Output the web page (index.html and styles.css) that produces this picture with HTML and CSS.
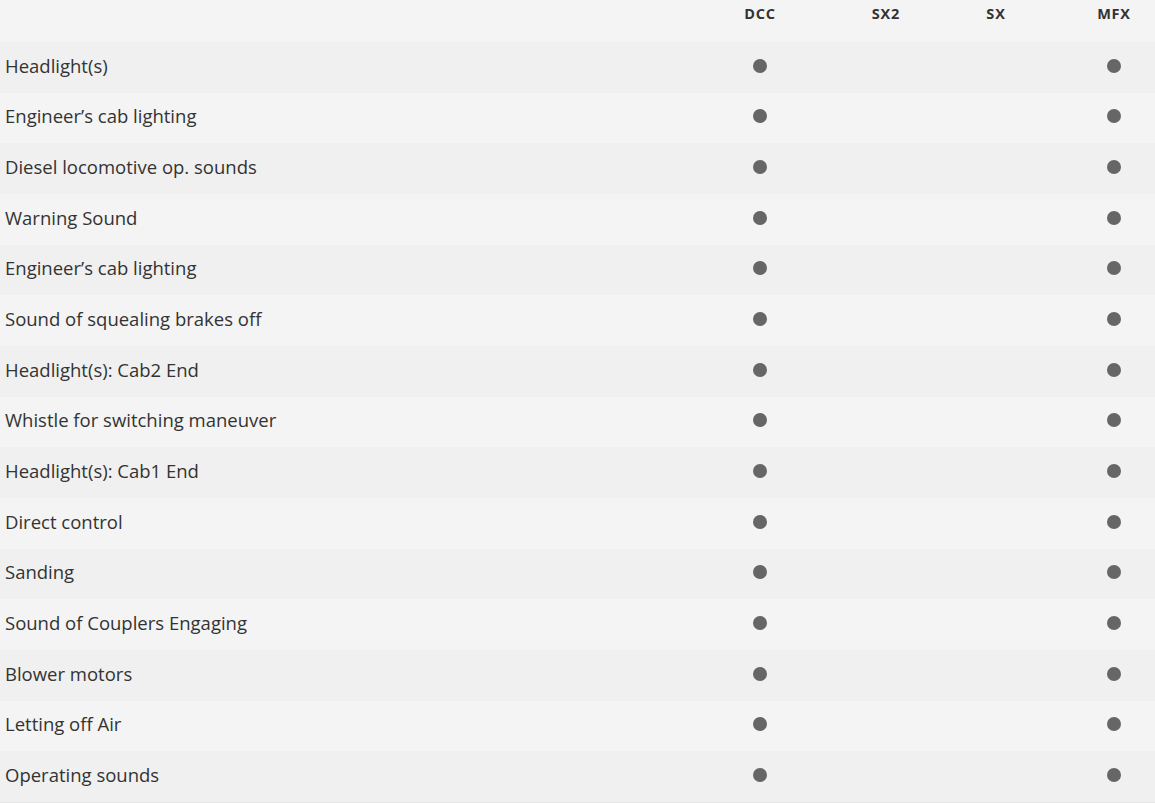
FILE: index.html
```html
<!DOCTYPE html>
<html lang="en">
<head>
<meta charset="utf-8">
<title>Functions</title>
<link rel="stylesheet" href="styles.css">
</head>
<body>
<div class="table">
  <div class="row head">
    <div class="cell label"></div>
    <div class="cell c">DCC</div>
    <div class="cell c">SX2</div>
    <div class="cell c">SX</div>
    <div class="cell c">MFX</div>
  </div>
  <div class="row"><div class="cell label">Headlight(s)</div><div class="cell c"><span class="dot"></span></div><div class="cell c"></div><div class="cell c"></div><div class="cell c"><span class="dot"></span></div></div>
  <div class="row"><div class="cell label">Engineer’s cab lighting</div><div class="cell c"><span class="dot"></span></div><div class="cell c"></div><div class="cell c"></div><div class="cell c"><span class="dot"></span></div></div>
  <div class="row"><div class="cell label">Diesel locomotive op. sounds</div><div class="cell c"><span class="dot"></span></div><div class="cell c"></div><div class="cell c"></div><div class="cell c"><span class="dot"></span></div></div>
  <div class="row"><div class="cell label">Warning Sound</div><div class="cell c"><span class="dot"></span></div><div class="cell c"></div><div class="cell c"></div><div class="cell c"><span class="dot"></span></div></div>
  <div class="row"><div class="cell label">Engineer’s cab lighting</div><div class="cell c"><span class="dot"></span></div><div class="cell c"></div><div class="cell c"></div><div class="cell c"><span class="dot"></span></div></div>
  <div class="row"><div class="cell label">Sound of squealing brakes off</div><div class="cell c"><span class="dot"></span></div><div class="cell c"></div><div class="cell c"></div><div class="cell c"><span class="dot"></span></div></div>
  <div class="row"><div class="cell label">Headlight(s): Cab2 End</div><div class="cell c"><span class="dot"></span></div><div class="cell c"></div><div class="cell c"></div><div class="cell c"><span class="dot"></span></div></div>
  <div class="row"><div class="cell label">Whistle for switching maneuver</div><div class="cell c"><span class="dot"></span></div><div class="cell c"></div><div class="cell c"></div><div class="cell c"><span class="dot"></span></div></div>
  <div class="row"><div class="cell label">Headlight(s): Cab1 End</div><div class="cell c"><span class="dot"></span></div><div class="cell c"></div><div class="cell c"></div><div class="cell c"><span class="dot"></span></div></div>
  <div class="row"><div class="cell label">Direct control</div><div class="cell c"><span class="dot"></span></div><div class="cell c"></div><div class="cell c"></div><div class="cell c"><span class="dot"></span></div></div>
  <div class="row"><div class="cell label">Sanding</div><div class="cell c"><span class="dot"></span></div><div class="cell c"></div><div class="cell c"></div><div class="cell c"><span class="dot"></span></div></div>
  <div class="row"><div class="cell label">Sound of Couplers Engaging</div><div class="cell c"><span class="dot"></span></div><div class="cell c"></div><div class="cell c"></div><div class="cell c"><span class="dot"></span></div></div>
  <div class="row"><div class="cell label">Blower motors</div><div class="cell c"><span class="dot"></span></div><div class="cell c"></div><div class="cell c"></div><div class="cell c"><span class="dot"></span></div></div>
  <div class="row"><div class="cell label">Letting off Air</div><div class="cell c"><span class="dot"></span></div><div class="cell c"></div><div class="cell c"></div><div class="cell c"><span class="dot"></span></div></div>
  <div class="row"><div class="cell label">Operating sounds</div><div class="cell c"><span class="dot"></span></div><div class="cell c"></div><div class="cell c"></div><div class="cell c"><span class="dot"></span></div></div>
</div>
</body>
</html>
```

FILE: styles.css
```css
html, body {
  margin: 0;
  padding: 0;
  background: #f4f4f4;
}
body {
  font-family: "Open Sans", "Liberation Sans", sans-serif;
  color: #333;
}
.table {
  display: flex;
  flex-direction: column;
  border-bottom: 1px solid #e6e6e6;
}
.row {
  display: grid;
  grid-template-columns: 1fr 186px 66px 154px 82px;
  align-items: center;
  height: 50.67px;
  background: #f4f4f4;
  font-size: 18.5px;
}
.row:nth-child(even) {
  background: #f0f0f0;
}
.row.head {
  height: 42px;
  align-items: start;
  background: #f4f4f4;
  font-size: 14.5px;
  font-weight: 700;
  letter-spacing: 0.8px;
  color: #333;
}
.head .cell {
  padding-top: 4px;
  line-height: 20px;
}
.cell.label {
  padding-left: 5px;
  padding-bottom: 3px;
  line-height: 24px;
  white-space: nowrap;
}
.cell.c {
  display: flex;
  justify-content: center;
}
.dot {
  display: block;
  width: 14px;
  height: 14px;
  border-radius: 50%;
  background: #666;
  margin-top: -3px;
}
```
